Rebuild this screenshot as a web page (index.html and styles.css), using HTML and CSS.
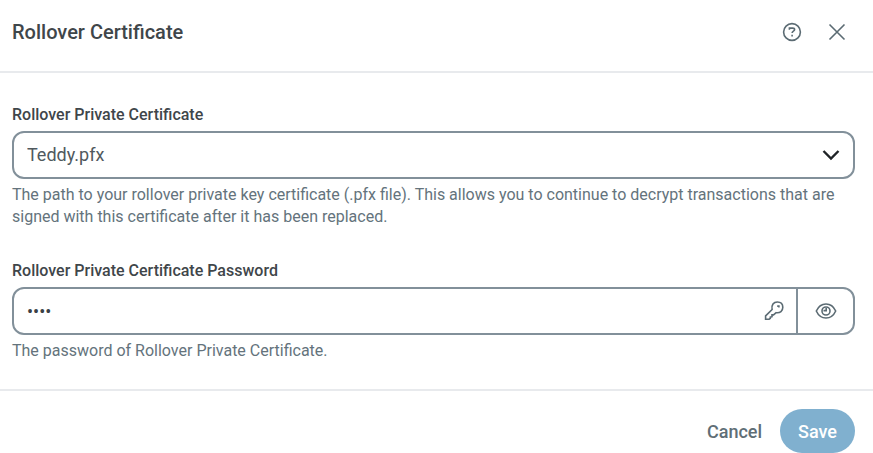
FILE: index.html
```html
<!DOCTYPE html>
<html lang="en">
	<head>
		<meta charset="utf-8">
		<title>Rollover Certificate</title>
		<link rel="stylesheet" href="styles.css">
	</head>
	<body>
		<form class="dialog">
			<div class="header">
				<h1>Rollover Certificate</h1>
				<button type="button" class="icon" aria-label="Help">
					<svg width="20" height="20" viewBox="0 0 20 20">
						<circle cx="10" cy="10" r="8.4" />
						<path d="M7.4 7.800V6.100h3.300c1.200 0 1.900.6 1.900 1.500 0 1.700-2.500 1.500-2.500 3.500M10.100 12.800v1.800" />
					</svg>
				</button>
				<button type="button" class="icon" aria-label="Close">
					<svg width="20" height="20" viewBox="0 0 20 20">
						<path d="M2.500 2.500l15 15M17.500 2.500l-15 15" />
					</svg>
				</button>
			</div>

			<div class="fields">
				<div class="field">
					<label for="certificate">Rollover Private Certificate</label>
					<select id="certificate" class="box">
						<option>Teddy.pfx</option>
					</select>
					<p>The path to your rollover private key certificate (.pfx file). This allows you to continue to decrypt transactions that are signed with this certificate after it has been replaced.</p>
				</div>

				<div class="field">
					<label for="password">Rollover Private Certificate Password</label>
					<div class="box password">
						<input id="password" type="password" value="pass">
						<button type="button" class="key" aria-label="Use a stored password">
							<svg width="20" height="20" viewBox="0 0 20 20">
								<path d="M8.100 8.500C7.200 4 9.600 1 13.300 1c3.300 0 5.500 2 5.500 5.200 0 3.700-2.700 6-6.600 5.500l-2.700 2.200H8v1.800l-1.700.4v1.200L5.100 18.200H1.600v-3.300z" />
								<path d="M13.200 5.100h1.700v1.500" />
							</svg>
						</button>
						<button type="button" class="eye" aria-label="Show password">
							<svg width="22" height="18" viewBox="0 0 22 18">
								<path d="M1.300 9C3.400 4.400 7 2 11 2s7.600 2.400 9.700 7c-2.100 4.600-5.700 7-9.700 7S3.400 13.600 1.300 9z" />
								<circle cx="11" cy="9" r="4" />
								<path d="M11.200 6v2.600H8.500" />
							</svg>
						</button>
					</div>
					<p>The password of Rollover Private Certificate.</p>
				</div>
			</div>

			<div class="footer">
				<button type="button" class="cancel">Cancel</button>
				<button type="submit" class="save">Save</button>
			</div>
		</form>
	</body>
</html>
```
FILE: styles.css
```css
* {
	box-sizing: border-box;
}
body {
	margin: 0;
	background: #FFFFFF;
	color: #3F464A;
	font-family: Roboto, "Liberation Sans", sans-serif;
	font-size: 16px;
}
button, input, select {
	margin: 0;
	padding: 0;
	border: none;
	background: none;
	font-family: inherit;
}
svg {
	display: block;
	fill: none;
	stroke: #5B6B73;
	stroke-width: 1.6;
}
.header {
	display: flex;
	align-items: center;
	gap: 25px;
	padding: 20px 26px 27px 12px;
	border-bottom: 2px solid #E8EAED;
}
.header h1 {
	flex: 1;
	margin: 0;
	font-size: 20px;
	font-weight: 500;
	line-height: 24px;
}
.fields {
	padding: 31px 18px 27px 12px;
}
.field + .field {
	margin-top: 32px;
}
.field label {
	display: block;
	margin-bottom: 5px;
	font-weight: 500;
	line-height: 22px;
}
.field p {
	margin: 5px 0 0;
	color: #64737C;
	line-height: 22px;
}
.box {
	width: 100%;
	height: 48px;
	border: 2px solid #82909A;
	border-radius: 12px;
}
select.box {
	padding: 0 13px 2px;
	appearance: none;
	color: #50595E;
	font-size: 18px;
	background: url("data:image/svg+xml,%3Csvg xmlns='http://www.w3.org/2000/svg' width='18' height='12' fill='none' stroke='%23202427' stroke-width='2.400'%3E%3Cpath d='M1.500 2l7.500 7.500L16.500 2'/%3E%3C/svg%3E") no-repeat right 13px center;
}
.password {
	display: flex;
	align-items: stretch;
}
.password input {
	flex: 1;
	min-width: 0;
	padding: 0 13px;
	outline: none;
	color: #3A4145;
	font-size: 18px;
}
.key {
	padding: 0 12px;
}
.eye {
	display: flex;
	align-items: center;
	justify-content: center;
	width: 57px;
	border-left: 2px solid #82909A;
}
.footer {
	display: flex;
	justify-content: flex-end;
	gap: 18px;
	padding: 18px 18px 0;
	border-top: 2px solid #E8EAED;
}
.footer button {
	height: 44px;
	font-size: 18px;
	font-weight: 500;
}
.cancel {
	color: #5F6E76;
}
.save {
	padding: 0 18px;
	border-radius: 22px;
	background: #80B0CF;
	color: #FFFFFF;
}
```
